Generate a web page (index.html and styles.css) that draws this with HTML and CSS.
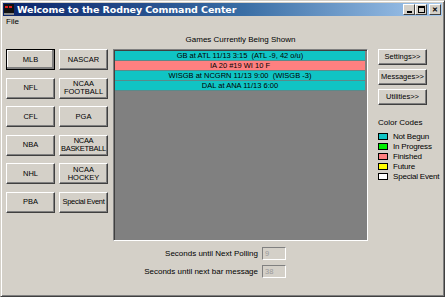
FILE: index.html
```html
<!DOCTYPE html>
<html lang="en">
<head>
    <meta charset="UTF-8">
    <title>Welcome to the Rodney Command Center</title>
    <link rel="stylesheet" href="styles.css">
</head>
<body>
    <div class="window">
        <div class="titlebar">
            <span class="app-icon"></span>
            <span class="title">Welcome to the Rodney Command Center</span>
            <div class="caption-btns">
                <span class="cap min"><i></i></span>
                <span class="cap max"><i></i></span>
                <span class="cap close">&#x2715;</span>
            </div>
        </div>
        <div class="menubar">
            <span>File</span>
        </div>
        <div class="client">
            <div class="sports">
                <button class="btn default">MLB</button>
                <button class="btn">NASCAR</button>
                <button class="btn">NFL</button>
                <button class="btn">NCAA<br>FOOTBALL</button>
                <button class="btn">CFL</button>
                <button class="btn">PGA</button>
                <button class="btn">NBA</button>
                <button class="btn narrow">NCAA<br>BASKETBALL</button>
                <button class="btn">NHL</button>
                <button class="btn">NCAA<br>HOCKEY</button>
                <button class="btn">PBA</button>
                <button class="btn narrow">Special Event</button>
            </div>

            <div class="center">
                <div class="heading">Games Currently Being Shown</div>
                <div class="listbox">
                    <div class="game not-begun">GB at ATL 11/13 3:15&nbsp; (ATL -9, 42 o/u)</div>
                    <div class="game finished">IA 20 #19 WI 10 F</div>
                    <div class="game not-begun">WISGB at NCGRN 11/13 9:00&nbsp; (WISGB -3)</div>
                    <div class="game not-begun">DAL at ANA 11/13 6:00</div>
                </div>
                <div class="timers">
                    <label>Seconds until Next Polling</label>
                    <input type="text" value="9" disabled>
                    <label>Seconds until next bar message</label>
                    <input type="text" value="38" disabled>
                </div>
            </div>

            <div class="side">
                <button class="btn small">Settings&gt;&gt;</button>
                <button class="btn small">Messages&gt;&gt;</button>
                <button class="btn small">Utilities&gt;&gt;</button>

                <div class="legend">
                    <div class="legend-title">Color Codes</div>
                    <div class="legend-item"><span class="swatch not-begun"></span>Not Begun</div>
                    <div class="legend-item"><span class="swatch in-progress"></span>In Progress</div>
                    <div class="legend-item"><span class="swatch finished"></span>Finished</div>
                    <div class="legend-item"><span class="swatch future"></span>Future</div>
                    <div class="legend-item"><span class="swatch special"></span>Special Event</div>
                </div>
            </div>
        </div>
    </div>
</body>
</html>
```

FILE: styles.css
```css
/* classic win32 look */
body {
    margin: 0;
    font-family: "Liberation Sans", Arial, sans-serif;
    font-size: 8px;
    color: #000;
    background: #d4d0c8;
}

.window {
    width: 445px;
    height: 297px;
    box-sizing: border-box;
    background: #d4d0c8;
    border: 1px solid #404040;
    border-top-color: #d4d0c8;
    border-left-color: #d4d0c8;
    box-shadow: inset 1px 1px 0 #fff, inset -1px -1px 0 #808080;
    padding: 2px 2px 0 2px;
    display: flex;
    flex-direction: column;
}

.titlebar {
    height: 13px;
    background: linear-gradient(to right, #0a246a, #3a6ea5 55%, #a6caf0);
    display: flex;
    align-items: center;
    padding-left: 1px;
}

.app-icon {
    width: 10px;
    height: 9px;
    background: #111;
    border-bottom: 2px solid #888;
    position: relative;
    margin-right: 3px;
}

.app-icon::before {
    content: "";
    position: absolute;
    left: 1px;
    top: 2px;
    width: 3px;
    height: 2px;
    background: #e02020;
    box-shadow: 4px 0 0 #e02020;
}

.title {
    color: #fff;
    font-family: "DejaVu Sans", sans-serif;
    font-weight: bold;
    font-size: 9.5px;
    letter-spacing: -0.1px;
}

.caption-btns {
    margin-left: auto;
    display: flex;
    margin-right: 1px;
}

.cap {
    width: 10px;
    height: 9px;
    background: #d4d0c8;
    border: 1px solid #404040;
    border-top-color: #fff;
    border-left-color: #fff;
    display: flex;
    align-items: center;
    justify-content: center;
    font-size: 7px;
    font-weight: bold;
    line-height: 1;
}

.cap.close {
    margin-left: 2px;
}

.cap.min i {
    width: 5px;
    height: 2px;
    background: #000;
    margin-top: 5px;
}

.cap.max i {
    width: 5px;
    height: 4px;
    border: 1px solid #000;
    border-top-width: 2px;
}

.menubar {
    height: 11px;
    padding-left: 3px;
    display: flex;
    align-items: center;
}

.client {
    flex: 1;
    display: flex;
}

.sports {
    margin: 22px 0 0 3px;
    display: grid;
    grid-template-columns: 49px 49px;
    grid-auto-rows: 21px;
    column-gap: 4px;
    row-gap: 7.6px;
    align-self: flex-start;
}

.btn {
    font-family: "Liberation Sans", Arial, sans-serif;
    font-size: 7.5px;
    line-height: 8px;
    padding: 0;
    color: #000;
    background: #d4d0c8;
    border: 1px solid #404040;
    border-top-color: #fff;
    border-left-color: #fff;
    box-shadow: inset -1px -1px 0 #808080;
}

.btn.narrow {
    letter-spacing: -0.3px;
}

.btn.default {
    outline: 1px solid #000;
    outline-offset: -1px;
    box-shadow: inset -2px -2px 0 #808080, inset 1px 1px 0 #fff;
}

.center {
    margin-left: 5px;
    width: 255px;
    display: flex;
    flex-direction: column;
}

.heading {
    height: 17px;
    display: flex;
    align-items: flex-end;
    justify-content: center;
    padding-bottom: 5px;
}

.listbox {
    height: 192px;
    box-sizing: border-box;
    background: #808080;
    border: 1px solid #808080;
    border-right-color: #fff;
    border-bottom-color: #fff;
    box-shadow: inset 1px 1px 0 #404040;
    padding: 1px 2px 0 1px;
}

.game {
    height: 9px;
    line-height: 9px;
    text-align: center;
    border-bottom: 1px solid #5a8a8a;
    font-size: 7.5px;
}

.not-begun {
    background: #10c4c4;
}

.finished {
    background: #ff8080;
}

.in-progress {
    background: #00f000;
}

.future {
    background: #ffff00;
}

.special {
    background: #fff;
}

.timers {
    margin-top: 6px;
    display: grid;
    grid-template-columns: 145px 24px;
    column-gap: 4px;
    row-gap: 5px;
    align-items: center;
}

.timers label {
    text-align: right;
}

.timers input {
    width: 24px;
    height: 13px;
    box-sizing: border-box;
    padding: 0 2px;
    font-family: "Liberation Sans", Arial, sans-serif;
    font-size: 7.5px;
    color: #9a9a9a;
    background: #d4d0c8;
    border: 1px solid #808080;
    border-right-color: #fff;
    border-bottom-color: #fff;
}

.side {
    margin: 22px 0 0 10px;
    display: flex;
    flex-direction: column;
    align-items: flex-start;
}

.btn.small {
    width: 49px;
    height: 16px;
    margin-bottom: 4px;
}

.legend {
    margin-top: 9px;
}

.legend-title {
    margin-bottom: 5px;
}

.legend-item {
    display: flex;
    align-items: center;
    height: 9.8px;
    letter-spacing: -0.2px;
}

.swatch {
    width: 8px;
    height: 5px;
    border: 1px solid #000;
    margin-right: 5px;
}
```
